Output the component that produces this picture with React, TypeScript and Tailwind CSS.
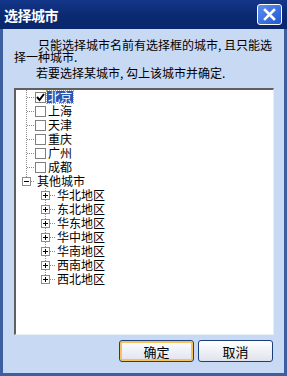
import React from 'react';

const cities = ['北京', '上海', '天津', '重庆', '广州', '成都'];
const regions = ['华北地区', '东北地区', '华东地区', '华中地区', '华南地区', '西南地区', '西北地区'];

const LINE = '#8c8c8c';

// 9x9 expander box centred on pixel column cx, row 7
function Expander({ cx, open }: { cx: number; open: boolean }) {
  return (
    <g shapeRendering="crispEdges">
      <rect x={cx - 4 + 0.5} y={3.5} width={8} height={8} fill="white" stroke={LINE} />
      <line x1={cx - 2} y1={7.5} x2={cx + 3} y2={7.5} stroke="black" />
      {!open && <line x1={cx + 0.5} y1={5} x2={cx + 0.5} y2={10} stroke="black" />}
    </g>
  );
}

function Dots(props: { x1: number; y1: number; x2: number; y2: number }) {
  return <line {...props} stroke={LINE} strokeDasharray="1 1" shapeRendering="crispEdges" />;
}

function CheckBox({ checked }: { checked: boolean }) {
  return (
    <span className="w-[11px] h-[11px] border border-[#7f7f7f] bg-white flex items-center justify-center shrink-0">
      {checked && (
        <svg width="9" height="9" viewBox="0 0 9 9">
          <polyline points="1,4 3.5,7 8,1" fill="none" stroke="black" strokeWidth="2" />
        </svg>
      )}
    </span>
  );
}

function CityRow({ name, selected }: { name: string; selected: boolean }) {
  return (
    <div className="flex items-center h-[14px]">
      <svg width="19" height="14" className="shrink-0">
        <Dots x1={10.5} y1={0} x2={10.5} y2={14} />
        <Dots x1={11} y1={7.5} x2={19} y2={7.5} />
      </svg>
      <CheckBox checked={selected} />
      <span
        className={
          selected
            ? 'ml-px px-px leading-[12px] bg-[#2b55b5] text-white outline outline-1 outline-dotted outline-[#c9a53a]'
            : 'ml-px px-px leading-[12px] text-black'
        }
      >
        {name}
      </span>
    </div>
  );
}

function RegionRow({ name, last }: { name: string; last: boolean }) {
  return (
    <div className="flex items-center h-[14px]">
      <svg width="39" height="14" className="shrink-0">
        <Dots x1={29.5} y1={0} x2={29.5} y2={3} />
        {!last && <Dots x1={29.5} y1={12} x2={29.5} y2={14} />}
        <Dots x1={34} y1={7.5} x2={39} y2={7.5} />
        <Expander cx={29} open={false} />
      </svg>
      <span className="ml-[2px] leading-[12px] text-black">{name}</span>
    </div>
  );
}

export default function App() {
  return (
    <div className="w-[287px] h-[376px] flex flex-col font-['Noto_Sans_CJK_SC','Liberation_Sans',sans-serif] select-none">
      {/* title bar */}
      <div className="h-[29px] shrink-0 flex items-center justify-between pl-[4px] pr-[5px] bg-gradient-to-b from-[#14378a] via-[#0b2a72] to-[#0a276c]">
        <span className="text-white font-bold text-[14px] leading-none tracking-[-0.5px]">选择城市</span>
        <button className="w-[25px] h-[21px] rounded-[3px] border border-white bg-gradient-to-br from-[#5d8ef0] to-[#2457d0] flex items-center justify-center">
          <svg width="13" height="13" viewBox="0 0 13 13">
            <path d="M2 2 L11 11 M11 2 L2 11" stroke="white" strokeWidth="2.6" strokeLinecap="square" />
          </svg>
        </button>
      </div>

      {/* body */}
      <div className="flex-1 flex flex-col bg-[#c8d9f4] border-x-[3px] border-b-[3px] border-[#3d5e9f] pl-[11px] pr-[10px] pt-[10px] pb-[10px] text-[12px] text-black">
        <div className="leading-[12px]">
          <p className="pl-[24px] whitespace-nowrap">只能选择城市名前有选择框的城市, 且只能选</p>
          <p className="whitespace-nowrap">择一种城市.</p>
        </div>
        <p className="pl-[22px] leading-[12px] mt-[4px] whitespace-nowrap">若要选择某城市, 勾上该城市并确定.</p>

        {/* tree */}
        <div className="mt-[9px] h-[247px] bg-white border-t-2 border-l-2 border-[#5f5f5f] border-r border-b border-r-[#e8eef8] border-b-[#e8eef8] flex flex-col">
          {cities.map((c, i) => (
            <CityRow key={c} name={c} selected={i === 0} />
          ))}
          <div className="flex items-center h-[14px]">
            <svg width="19" height="14" className="shrink-0">
              <Dots x1={10.5} y1={0} x2={10.5} y2={3} />
              <Dots x1={15} y1={7.5} x2={19} y2={7.5} />
              <Expander cx={10} open={true} />
            </svg>
            <span className="ml-[2px] leading-[12px]">其他城市</span>
          </div>
          {regions.map((r, i) => (
            <RegionRow key={r} name={r} last={i === regions.length - 1} />
          ))}
        </div>

        {/* buttons */}
        <div className="mt-[5px] flex justify-end gap-[4px] pr-[1px]">
          <button className="w-[75px] h-[22px] rounded-[3px] border border-[#1c3f7c] bg-gradient-to-b from-white to-[#dfe3ee] shadow-[inset_0_0_0_2px_#f7c25a] text-[13px] leading-none text-black">
            确定
          </button>
          <button className="w-[75px] h-[22px] rounded-[3px] border border-[#1c3f7c] bg-gradient-to-b from-white to-[#dfe3ee] text-[13px] leading-none text-black">
            取消
          </button>
        </div>
      </div>
    </div>
  );
}
